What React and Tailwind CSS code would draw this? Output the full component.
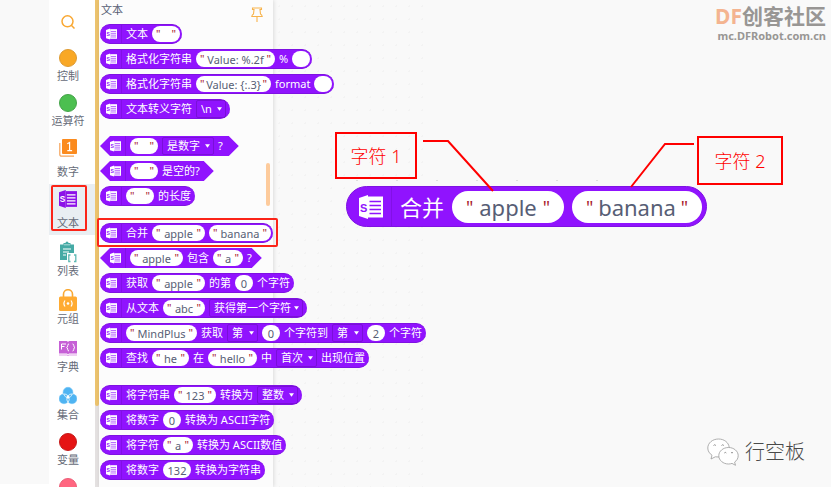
import React, { useState } from "react";
import clsx from "clsx";

const TextIcon = ({ className, main = "#fff", detail = "#9013fe" }) => (
  <svg viewBox="0 0 24 24" className={className} aria-hidden="true">
    <path d="M0 3 9 0v24L0 21Z" fill={main} />
    <path d="M9 1.5h15v21H9Z" fill={main} />
    <path d="M10.500 6.500h11.500M10.500 10.500h11.500M10.500 14.500h11.500M10.500 18.500h11.500" stroke={detail} strokeWidth="1.400" />
    <text x="1" y="16.500" fontSize="11" fontWeight="700" fontFamily="Liberation Sans" fill={detail}>
      S
    </text>
  </svg>
);

const Circle = ({ fill, stroke }) => (
  <svg viewBox="0 0 18 18" className="h-[18px] w-[18px]" aria-hidden="true">
    <circle cx="9" cy="9" r="8.5" fill={fill} stroke={stroke} />
  </svg>
);

const NumberIcon = () => (
  <svg viewBox="0 0 18 18" className="h-[18px] w-[18px]" aria-hidden="true">
    <path d="M.8 4v11.500a1.700 1.700 0 0 0 1.700 1.700H15" fill="none" stroke="#f5a45a" strokeWidth="1.200" />
    <rect x="3" y="0" width="15" height="15" rx="1" fill="#fb8b1e" />
    <path d="M8.300 4.800 10.600 3.500v8M8.300 11.600h4.800" fill="none" stroke="#fff" strokeWidth="1.200" />
  </svg>
);

const ListIcon = () => (
  <svg viewBox="0 0 18 22" className="h-[22px] w-[18px]" aria-hidden="true">
    <path d="M1 3.500h3.500V2h2a1.500 1.500 0 0 1 3 0h2v1.500H15V12H8v7H1Z" fill="#45aaa5" />
    <path d="M4 8h8M4 11h6M4 14h3" stroke="#fff" strokeWidth="1.100" />
    <path d="M5 3.800h6" stroke="#c9e8e6" strokeWidth=".8" />
    <path d="M11.500 14H9.800v6.500h1.700M15 14h1.800v6.500H15" fill="none" stroke="#5fb9b4" strokeWidth="1.300" />
  </svg>
);

const TupleIcon = () => (
  <svg viewBox="0 0 18 22" className="h-[22px] w-[18px]" aria-hidden="true">
    <path d="M4.500 8V5.200a4.500 4.500 0 0 1 9 0V8" fill="none" stroke="#f9a833" strokeWidth="1.600" />
    <rect x="0" y="7.500" width="18" height="14.500" rx="1.500" fill="#ffab32" />
    <path d="M6 11.500q-2.200 3 0 6M12 11.500q2.200 3 0 6" fill="none" stroke="#fff" strokeWidth="1.200" />
    <circle cx="9" cy="14.500" r="1.300" fill="#fff" />
  </svg>
);

const DictIcon = () => (
  <svg viewBox="0 0 18 22" className="h-[22px] w-[18px]" aria-hidden="true">
    <path d="M0 4h8l1 1 1-1h8v12.500h-8l-1 1-1-1H0Z" fill="#c660d6" />
    <path d="M2.500 12.500V7H7M2.500 9.500h3" fill="none" stroke="#fff" strokeWidth="1" />
    <path d="M10 7q-1.300 0-1.300 1.600T7.600 10.500q1.100.2 1.100 1.800T10 14M13.500 7q1.300 0 1.300 1.600t1.100 1.900q-1.100.2-1.100 1.800T13.500 14" fill="none" stroke="#fff" strokeWidth="1" />
    <path d="M0 18h8l1 .8 1-.8h8" fill="none" stroke="#d58ae0" strokeWidth=".8" />
  </svg>
);

const SetIcon = () => (
  <svg viewBox="0 0 18 22" className="h-[22px] w-[18px]" aria-hidden="true">
    <g fill="#4fb4f2" stroke="#74c5f7" strokeWidth=".6">
      <circle cx="9" cy="7.200" r="4.900" />
      <circle cx="5" cy="13.800" r="4.900" />
      <circle cx="13" cy="13.800" r="4.900" />
    </g>
    <path
      d="M4.600 9q1.200 3.500 4.400 3.500T13.400 9M4.600 9Q8 8.500 9 11.500q1-3 4.400-2.500M9 17.500Q6.500 15 9 11.500q2.500 3.500 0 6Z"
      fill="none"
      stroke="#d9f0fd"
      strokeWidth=".9"
    />
    <path d="m9 9.500 2 3.800H7Z" fill="#fff" />
  </svg>
);

const PinIcon = () => (
  <svg viewBox="0 0 12 15" className="h-[15px] w-3" aria-hidden="true">
    <path
      d="M1.500 1h9v1.500H9l.5 4.500q1.500.8 1.700 2.500H.8Q1 7.800 2.500 7L3 2.500H1.500ZM6 9.500V15"
      fill="none"
      stroke="#f7b34c"
      strokeWidth="1.100"
    />
  </svg>
);

const categories = [
  { name: "控制", icon: <Circle fill="#f9a825" stroke="#dd9a32" />, gap: "gap-[3px]" },
  { name: "运算符", icon: <Circle fill="#4cbf50" stroke="#45a349" />, gap: "gap-[3px]" },
  { name: "数字", icon: <NumberIcon />, gap: "gap-[9px]" },
  {
    name: "文本",
    icon: <TextIcon className="h-[18px] w-[18px]" main="#8c12e8" detail="#fff" />,
    gap: "gap-[9px]",
  },
  { name: "列表", icon: <ListIcon />, gap: "gap-0.5" },
  { name: "元组", icon: <TupleIcon />, gap: "gap-0.5" },
  { name: "字典", icon: <DictIcon />, gap: "gap-0.5" },
  { name: "集合", icon: <SetIcon />, gap: "gap-0.5" },
  { name: "变量", icon: <Circle fill="#e51414" stroke="#c41a1a" />, gap: "gap-[3px]" },
  { name: "", icon: <Circle fill="#ff6680" stroke="#ec5f78" />, gap: "gap-[3px]" },
];

const str = (value, width) => ({ type: "str", value, width });
const num = (value, width) => ({ type: "num", value, width });
const menu = (value, width) => ({ type: "menu", value, width });

const groups = [
  [
    { parts: ["文本", str(" ", "w-[28px]")] },
    { parts: ["格式化字符串", str("Value: %.2f", "w-[79px]"), "%", num("", "w-[18px]")] },
    { parts: ["格式化字符串", str("Value: {:.3}", "w-[75px]"), "format", num("", "w-[18px]")] },
    { parts: ["文本转义字符", menu("\\n", "w-[30px]")] },
  ],
  [
    { hex: "pr-4", parts: [str(" ", "w-[28px]"), menu("是数字", "w-[52px]"), "?"] },
    { hex: "pr-3.5", parts: [str(" ", "w-[28px]"), "是空的?"] },
    { parts: [str(" ", "w-[28px]"), "的长度"] },
  ],
  [
    { marked: true, parts: ["合并", str("apple", "w-[53px]"), str("banana", "w-[62px]")] },
    { hex: "pr-2.5", parts: [str("apple", "w-[53px]"), "包含", str("a", "w-[30px]"), "?"] },
    { parts: ["获取", str("apple", "w-[53px]"), "的第", num("0", "w-[18px]"), "个字符"] },
    { parts: ["从文本", str("abc", "w-[42px]"), menu("获得第一个字符", "w-[94px]")] },
    {
      parts: [
        str("MindPlus", "w-[71px]"),
        "获取",
        menu("第", "w-[31px]"),
        num("0", "w-[18px]"),
        "个字符到",
        menu("第", "w-[31px]"),
        num("2", "w-[18px]"),
        "个字符",
      ],
    },
    {
      parts: ["查找", str("he", "w-[37px]"), "在", str("hello", "w-[49px]"), "中", menu("首次", "w-[41px]"), "出现位置"],
    },
  ],
  [
    { parts: ["将字符串", str("123", "w-[42px]"), "转换为", menu("整数", "w-[41px]")] },
    { parts: ["将数字", num("0", "w-[18px]"), "转换为 ASCII字符"] },
    { parts: ["将字符", str("a", "w-[30px]"), "转换为 ASCII数值"] },
    { parts: ["将数字", num("132", "w-[28px]"), "转换为字符串"] },
  ],
];

function Field({ part, large }) {
  if (typeof part === "string") return <span>{part}</span>;

  if (part.type === "menu") {
    return (
      <span className={clsx("relative h-[18px] shrink-0", part.width)}>
        <select
          aria-label={part.value}
          className="block h-full w-full appearance-none rounded-xs border border-[#7a0fd8] bg-transparent pl-1 leading-4 outline-none"
        >
          <option>{part.value}</option>
        </select>
        <svg viewBox="0 0 6 4" className="pointer-events-none absolute top-[7px] right-1 h-1 w-[5px]">
          <path d="M0 0h6L3 4Z" fill="#fff" />
        </svg>
      </span>
    );
  }

  const quote = <span className={clsx("text-[#a8202c]", large && "text-lg leading-7")}>"</span>;

  return (
    <label
      className={clsx(
        "flex shrink-0 items-center rounded-full bg-white text-[#575e75]",
        large ? "h-8 px-3.5" : "h-4",
        !large && part.type === "str" && "px-1",
        part.width
      )}
    >
      {part.type === "str" && quote}
      <input
        type="text"
        aria-label="参数"
        defaultValue={part.value}
        className="h-full w-full min-w-0 bg-transparent text-center outline-none"
      />
      {part.type === "str" && quote}
    </label>
  );
}

function Block({ hex, marked, parts }) {
  const last = parts[parts.length - 1];
  const endsWithInput = last.type === "str" || last.type === "num";

  return (
    <div
      className={clsx(
        "relative flex h-5 w-max items-center gap-1 bg-[#9013fe] text-[11px] leading-4 whitespace-nowrap text-white",
        hex
          ? "pl-2.5 [clip-path:polygon(0_50%,10px_0,calc(100%-10px)_0,100%_50%,calc(100%-10px)_100%,10px_100%)]"
          : "rounded-full border-y border-[#7f12e2] pl-1.5",
        hex || (endsWithInput ? "pr-0.5" : "pr-1")
      )}
    >
      <TextIcon className="h-3 w-[11px]" />
      <span className="h-full w-px bg-[#8210e6]" />
      {parts.map((part, i) => (
        <Field key={i} part={part} />
      ))}
      {marked && (
        <span className="pointer-events-none absolute -top-1.5 -right-[5px] -bottom-[5px] -left-[3px] rounded-xs border-2 border-[#fb2418]" />
      )}
    </div>
  );
}

function WorkspaceBlock() {
  return (
    <div className="absolute top-[186px] left-[73px] flex h-[41px] items-center gap-2 rounded-full border border-[#7f12e2] bg-[#9013fe] pr-1 pl-3 text-[22px] leading-8 whitespace-nowrap text-white">
      <TextIcon className="h-6 w-6" />
      <span className="h-full w-px bg-[#8210e6]" />
      <span>合并</span>
      <Field large part={str("apple", "w-[112px]")} />
      <Field large part={str("banana", "w-[130px]")} />
    </div>
  );
}

export default function App() {
  const [active, setActive] = useState("文本");

  return (
    <div className="flex h-screen overflow-hidden bg-[#f9f9f9] font-['Noto_Sans','Noto_Sans_CJK_SC',sans-serif]">
      <div className="w-[49px] shrink-0 border-b-3 border-white" />

      <nav className="flex w-[46px] shrink-0 flex-col bg-white">
        <button className="flex h-[43px] shrink-0 items-center justify-center pr-2" aria-label="搜索">
          <svg viewBox="0 0 14 14" className="h-3.5 w-3.5" fill="none" stroke="#f9a833" strokeWidth="1.500">
            <circle cx="6.500" cy="6.300" r="5.500" />
            <path d="m10.300 10.300 3.200 3.200" />
          </svg>
        </button>
        {categories.map((item) => (
          <button
            key={item.name}
            onClick={() => setActive(item.name)}
            className={clsx(
              "relative flex shrink-0 flex-col items-center py-1.5 pr-2 text-[11px] leading-3 text-[#666b78]",
              item.gap,
              active === item.name && "bg-[#e9eef2]"
            )}
          >
            {item.icon}
            <span className="whitespace-nowrap">{item.name}</span>
            {active === item.name && (
              <span className="pointer-events-none absolute top-px right-2 bottom-1 left-0.5 rounded-xs border-2 border-[#fb2418]" />
            )}
          </button>
        ))}
      </nav>

      <div className="flex w-1 shrink-0 flex-col bg-[#e4e1e1]">
        <div className="h-5/6 rounded-b-full bg-[#ecc36e]" />
      </div>

      <aside className="relative z-10 w-[174px] shrink-0 bg-[#fcfcfc] pl-px shadow-[1px_0_4px_rgba(0,0,0,0.12)]">
        <header className="flex h-6 items-start justify-between pt-1 pr-2.5 pl-px text-[11px] leading-3 text-[#575e75]">
          <h2>文本</h2>
          <button aria-label="固定" className="pt-[3px]">
            <PinIcon />
          </button>
        </header>
        <div className="flex flex-col gap-[17px]">
          {groups.map((blocks, i) => (
            <div key={i} className="flex flex-col gap-[5px]">
              {blocks.map((block, j) => (
                <Block key={j} {...block} />
              ))}
            </div>
          ))}
        </div>
        <div className="absolute top-[163px] right-[3px] h-[43px] w-1 rounded-full bg-[#fdcb9c]" />
      </aside>

      <main className="relative min-w-0 flex-1">
        <div className="absolute inset-y-0 left-0 w-40 bg-[radial-gradient(#f3f3f3_1px,transparent_1px)] bg-size-[13px_13px]" />
        <div className="absolute top-[179px] left-[64px] h-[3px] w-[320px] bg-[radial-gradient(#dedede_1px,transparent_1px)] bg-size-[40px_3px]" />

        <div className="absolute top-0.5 right-[5px] text-right font-bold text-[#989694]">
          <p className="text-[21px] leading-7">
            <span className="text-[#f4b490]">DF</span>创客社区
          </p>
          <p className="text-[11px] leading-3">mc.DFRobot.com.cn</p>
        </div>

        <WorkspaceBlock />

        <svg className="pointer-events-none absolute top-0 left-0 h-60 w-[460px]" fill="none" stroke="#f00" strokeWidth="2">
          <path d="M150 141h25l45 50M421 144h-29l-34 43" />
        </svg>
        <p className="absolute top-[132px] left-[62px] flex h-[47px] w-[82px] items-center justify-center border-2 border-[#f00] text-lg font-light text-[#f00]">
          字符 1
        </p>
        <p className="absolute top-[136px] left-[424px] flex h-[49px] w-[86px] items-center justify-center border-2 border-[#f00] text-lg font-light text-[#f00]">
          字符 2
        </p>

        <div className="absolute right-[26px] bottom-[19px] flex items-center gap-1.5 text-xl leading-8 font-light text-[#4a4a4a]">
          <svg viewBox="0 0 32 28" className="h-7 w-8" fill="#fff" stroke="#9a9a9a" strokeWidth=".8" aria-hidden="true">
            <path d="M11.500 1C5.500 1 .8 5 .8 10c0 3 1.600 5.500 4.200 7.200L4 21l4.300-2.200q6 1.500 10.700-1.800 3.600-3 3.200-7.600C21.700 4.500 17.200 1 11.500 1Z" />
            <path d="M21.500 9.500c-5.300 0-9.700 3.600-9.700 8.200s4.400 8.300 9.700 8.300q1.800 0 3.500-.6l3.500 1.900-.9-3.200c2.200-1.500 3.600-3.800 3.600-6.400 0-4.600-4.400-8.200-9.700-8.200Z" />
            <path d="M6.500 7.500q1.200-1.500 2.400 0M14.500 7.500q1.200-1.500 2.400 0M17.300 15q1-1.300 2 0M24 15q1-1.300 2 0" fill="none" stroke="#777" />
          </svg>
          <span>行空板</span>
        </div>
      </main>
    </div>
  );
}
